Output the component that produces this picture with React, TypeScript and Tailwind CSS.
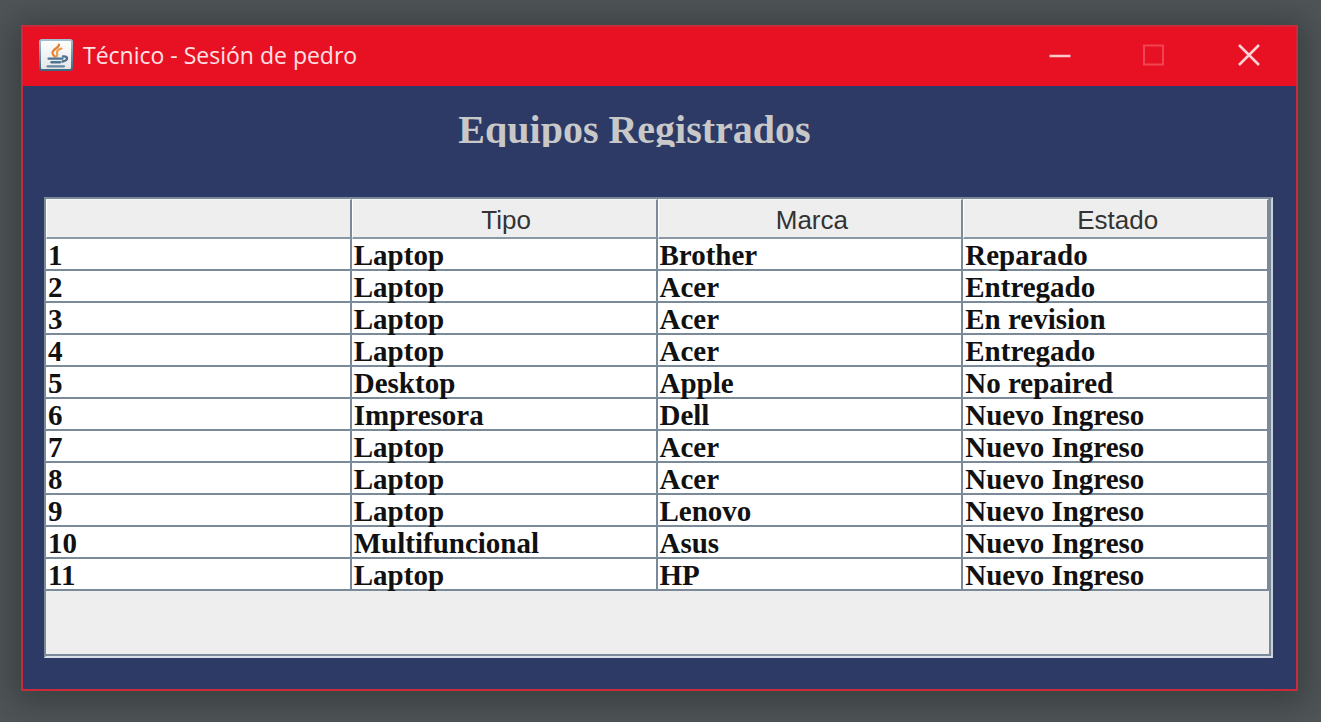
type Equipo = { id: number; tipo: string; marca: string; estado: string };

const equipos: Equipo[] = [
  { id: 1, tipo: "Laptop", marca: "Brother", estado: "Reparado" },
  { id: 2, tipo: "Laptop", marca: "Acer", estado: "Entregado" },
  { id: 3, tipo: "Laptop", marca: "Acer", estado: "En revision" },
  { id: 4, tipo: "Laptop", marca: "Acer", estado: "Entregado" },
  { id: 5, tipo: "Desktop", marca: "Apple", estado: "No repaired" },
  { id: 6, tipo: "Impresora", marca: "Dell", estado: "Nuevo Ingreso" },
  { id: 7, tipo: "Laptop", marca: "Acer", estado: "Nuevo Ingreso" },
  { id: 8, tipo: "Laptop", marca: "Acer", estado: "Nuevo Ingreso" },
  { id: 9, tipo: "Laptop", marca: "Lenovo", estado: "Nuevo Ingreso" },
  { id: 10, tipo: "Multifuncional", marca: "Asus", estado: "Nuevo Ingreso" },
  { id: 11, tipo: "Laptop", marca: "HP", estado: "Nuevo Ingreso" },
];

function JavaIcon() {
  return (
    <svg className="h-8 w-[34px]" viewBox="0 0 34 32" fill="none" aria-hidden="true">
      <defs>
        <linearGradient id="java-tile" x1="0" y1="0" x2="0" y2="1">
          <stop offset="0" stopColor="#ffffff" />
          <stop offset="1" stopColor="#e3e5e7" />
        </linearGradient>
        <linearGradient id="java-edge" x1="0" y1="0" x2="0" y2="1">
          <stop offset="0" stopColor="#9fc0d0" />
          <stop offset="1" stopColor="#3f6a83" />
        </linearGradient>
      </defs>
      <rect x="1" y="1" width="32" height="30" rx="2" fill="url(#java-tile)" stroke="url(#java-edge)" strokeWidth="2" />
      <path d="M20 5.500c.3 3.500-6.500 4.500-6.500 8.300 0 2 1.500 3 2.500 4" stroke="#e8812f" strokeWidth="2.200" strokeLinecap="round" />
      <path d="M22.500 9.500c-3 .8-5 2.500-4.500 4.200.4 1.400 1 2.300-.5 4" stroke="#ee9a4d" strokeWidth="2.200" strokeLinecap="round" />
      <path d="M9.500 19.700h14" stroke="#4f7393" strokeWidth="2.200" strokeLinecap="round" />
      <path d="M12.500 23.300h8.500" stroke="#4f7393" strokeWidth="2.400" strokeLinecap="round" />
      <path d="M24 17.500c2.500-.5 4.500.8 4 2.300-.4 1.500-2.500 2.400-4.500 2.700" stroke="#4f7393" strokeWidth="2.400" strokeLinecap="round" />
      <path d="M8.500 27.300h16.500" stroke="#6685a0" strokeWidth="2.200" strokeLinecap="round" />
    </svg>
  );
}

function TitleBar() {
  return (
    <header className="flex h-[59px] items-center bg-[#e81123] pb-1 pl-4">
      <JavaIcon />
      <span className="ml-2.5 flex-1 font-['Open_Sans',sans-serif] text-[23px] leading-8 text-[#ffe1e4]">
        Técnico - Sesión de pedro
      </span>
      <button type="button" aria-label="Minimizar" className="flex h-full w-[94px] items-center justify-center">
        <svg className="size-6" viewBox="0 0 24 24" aria-hidden="true">
          <path d="M1.500 13h21" stroke="#fbc9cd" strokeWidth="2.500" />
        </svg>
      </button>
      <button type="button" aria-label="Maximizar" disabled className="flex h-full w-[94px] items-center justify-center">
        <svg className="size-6" viewBox="0 0 24 24" fill="none" aria-hidden="true">
          <rect x="2" y="2.500" width="19" height="19" stroke="#ef4452" strokeWidth="2" />
        </svg>
      </button>
      <button type="button" aria-label="Cerrar" className="flex h-full w-[95px] items-center justify-center">
        <svg className="size-6" viewBox="0 0 24 24" fill="none" aria-hidden="true">
          <path d="M2 2l20 20M22 2L2 22" stroke="#fdd3d6" strokeWidth="2.500" />
        </svg>
      </button>
    </header>
  );
}

const columnas = ["", "Tipo", "Marca", "Estado"];

export default function App() {
  return (
    <div className="flex min-h-screen flex-col bg-[#505557] pt-[25px] pr-[23px] pb-[31px] pl-[21px]">
      <main className="flex flex-1 flex-col border-2 border-[#c92b3b] bg-[#2e3a66] shadow-[0_4px_32px_8px_rgba(40,46,46,0.6)]">
        <TitleBar />
        <div className="flex flex-1 flex-col pt-6 pr-[23px] pb-[31px] pl-[21px]">
          <h1 className="mb-[50px] h-[37px] overflow-hidden pt-[3px] pr-12 text-center font-['Liberation_Serif',serif] text-[40px] leading-[34px] font-bold text-[#c8c8c8]">
            Equipos Registrados
          </h1>
          <div className="flex flex-1 flex-col border-2 border-t-[#7a8a99] border-r-[#c8d2dd] border-b-[#d8dfe6] border-l-[#7a8a99] bg-[#eeeeee]">
            <div className="flex-1 border-r-2 border-b-2 border-[#7a8a99]">
              <table className="w-full table-fixed border-separate border-spacing-0">
                <thead>
                  <tr>
                    {columnas.map((columna) => (
                      <th
                        key={columna}
                        scope="col"
                        className="h-10 border-t border-r-2 border-b-2 border-l border-t-[#f7f7f7] border-r-[#7a8a99] border-b-[#8a98a6] border-l-white pt-0.5 pr-0 pb-0 pl-1 font-['Liberation_Sans',sans-serif] text-[26px] leading-8 font-normal text-[#333333]"
                      >
                        {columna}
                      </th>
                    ))}
                  </tr>
                </thead>
                <tbody>
                  {equipos.map((equipo) => (
                    <tr key={equipo.id}>
                      {[equipo.id, equipo.tipo, equipo.marca, equipo.estado].map((valor, i) => (
                        <td
                          key={i}
                          className="h-8 border-r-2 border-b-2 border-[#7a8a99] bg-white py-0 pr-0 pl-0.5 font-['Liberation_Serif',serif] text-[29px] font-bold text-[#111111]"
                        >
                          <div className="-mb-0.5 leading-8 whitespace-nowrap">{valor}</div>
                        </td>
                      ))}
                    </tr>
                  ))}
                </tbody>
              </table>
            </div>
          </div>
        </div>
      </main>
    </div>
  );
}
